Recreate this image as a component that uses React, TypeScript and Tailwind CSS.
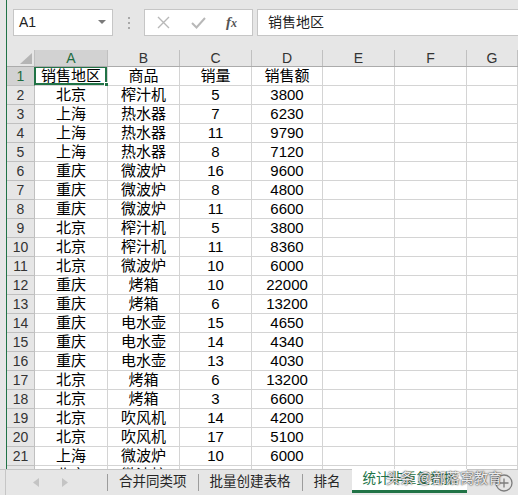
import React from 'react';

const rows: string[][] = [
  ['销售地区', '商品', '销量', '销售额'],
  ['北京', '榨汁机', '5', '3800'],
  ['上海', '热水器', '7', '6230'],
  ['上海', '热水器', '11', '9790'],
  ['上海', '热水器', '8', '7120'],
  ['重庆', '微波炉', '16', '9600'],
  ['重庆', '微波炉', '8', '4800'],
  ['重庆', '微波炉', '11', '6600'],
  ['北京', '榨汁机', '5', '3800'],
  ['北京', '榨汁机', '11', '8360'],
  ['北京', '微波炉', '10', '6000'],
  ['重庆', '烤箱', '10', '22000'],
  ['重庆', '烤箱', '6', '13200'],
  ['重庆', '电水壶', '15', '4650'],
  ['重庆', '电水壶', '14', '4340'],
  ['重庆', '电水壶', '13', '4030'],
  ['北京', '烤箱', '6', '13200'],
  ['北京', '烤箱', '3', '6600'],
  ['北京', '吹风机', '14', '4200'],
  ['北京', '吹风机', '17', '5100'],
  ['上海', '微波炉', '10', '6000'],
  ['北京', '微波炉', '', ''],
];

const cols = ['A', 'B', 'C', 'D', 'E', 'F', 'G'];
const widths = ['w-[73px]', 'w-[72px]', 'w-[72px]', 'w-[71px]', 'w-[72px]', 'w-[72px]', 'flex-1'];

const font = { fontFamily: '"Liberation Sans", "Noto Sans CJK SC", sans-serif' };

function Toolbar() {
  return (
    <div className="h-[50px] flex items-start pt-[9px] pl-[6px] shrink-0">
      {/* name box */}
      <div className="w-[100px] h-[27px] bg-white border border-[#c6c6c6] flex items-center justify-between pl-[5px] pr-[6px]">
        <span className="text-[14px] text-[#222]">A1</span>
        <svg width="8" height="5" viewBox="0 0 8 5"><path d="M0 0h8L4 4z" fill="#7a7a7a" /></svg>
      </div>
      <div className="w-[31px] h-[27px] flex flex-col items-center justify-center gap-[3px]">
        <span className="w-[2px] h-[2px] bg-[#a8a8a8]" />
        <span className="w-[2px] h-[2px] bg-[#a8a8a8]" />
        <span className="w-[2px] h-[2px] bg-[#a8a8a8]" />
      </div>
      {/* formula buttons */}
      <div className="w-[109px] h-[27px] bg-white border border-[#c6c6c6] flex items-center">
        <svg className="ml-[12px]" width="13" height="13" viewBox="0 0 13 13">
          <path d="M1 1l11 11M12 1L1 12" stroke="#b8b8b8" strokeWidth="1.4" />
        </svg>
        <svg className="ml-[21px]" width="15" height="12" viewBox="0 0 15 12">
          <path d="M1 6l4.5 4.5L14 1" stroke="#b8b8b8" strokeWidth="2" fill="none" />
        </svg>
        <span className="ml-[20px] text-[15px] italic font-bold text-[#555]" style={{ fontFamily: '"Liberation Serif", serif' }}>
          f<span className="text-[12px]">x</span>
        </span>
      </div>
      <div className="ml-[4px] flex-1 -mr-[4px] h-[27px] bg-white border border-[#c6c6c6] flex items-center pl-[10px]">
        <span className="text-[14px] text-[#222]">销售地区</span>
      </div>
    </div>
  );
}

function HeaderRow() {
  return (
    <div className="flex h-[17px] shrink-0 border-b border-[#ababab] bg-[#e6e6e6]">
      <div className="w-[28px] border-r border-[#c0c0c0] flex items-end justify-end pr-[2px] pb-[2px]">
        <svg width="12" height="11" viewBox="0 0 12 11"><path d="M12 0v11H0z" fill="#b5b5b5" /></svg>
      </div>
      {cols.map((c, i) => (
        <div
          key={c}
          className={`${widths[i]} border-r border-[#c0c0c0] flex items-center justify-center text-[14px] leading-none ${
            i === 0 ? 'bg-[#d2d2d2] text-[#1e6b40]' : 'text-[#333]'
          }`}
        >
          {c}
        </div>
      ))}
    </div>
  );
}

function DataRow({ n, data }: { n: number; data: string[] }) {
  return (
    <div className="flex h-[19px] shrink-0">
      <div
        className={`w-[28px] border-r border-b flex items-center justify-center text-[14px] ${
          n === 1 ? 'bg-[#d2d2d2] text-[#1e6b40] border-r-[#217346] border-b-[#c0c0c0]' : 'bg-[#e6e6e6] text-[#333] border-[#c0c0c0]'
        }`}
      >
        {n}
      </div>
      {cols.map((c, i) => (
        <div
          key={c}
          className={`${widths[i]} relative bg-white border-r border-b border-[#d4d4d4] flex items-center justify-center text-[15px] text-black whitespace-nowrap`}
        >
          {data[i] ?? ''}
          {n === 1 && i === 0 && (
            <>
              <div className="absolute -left-[1px] -top-[1px] right-0 bottom-0 border-2 border-[#217346]" />
              <div className="absolute -right-[3px] -bottom-[3px] w-[6px] h-[6px] bg-[#217346] border border-white" />
            </>
          )}
        </div>
      ))}
    </div>
  );
}

function TabBar() {
  const tabs = ['合并同类项', '批量创建表格', '排名'];
  return (
    <div className="h-[26px] shrink-0 flex items-stretch border-t border-[#c6c6c6] bg-[#e6e6e6] relative">
      <div className="w-[6px] border-r border-[#c6c6c6]" />
      <div className="w-[101px] flex items-center">
        <svg className="ml-[27px]" width="6" height="9" viewBox="0 0 6 9"><path d="M6 0v9L0 4.5z" fill="#c4c4c4" /></svg>
        <svg className="ml-[23px]" width="6" height="9" viewBox="0 0 6 9"><path d="M0 0v9l6-4.5z" fill="#c4c4c4" /></svg>
      </div>
      {tabs.map((t) => (
        <div key={t} className="flex items-center">
          <span className="w-[1px] h-[17px] bg-[#9c9c9c]" />
          <span className="px-[11px] text-[13.5px] text-[#262626]">{t}</span>
        </div>
      ))}
      <div className="w-[115px] bg-white border-b-[3px] border-[#217346] mb-[2px] -mt-[1px] flex items-center pl-[11px] text-[13.5px] text-[#217346]">
        统计非重复数据
      </div>
      <div className="flex-1 flex items-center justify-end pr-[5px]">
        <svg width="18" height="18" viewBox="0 0 18 18">
          <circle cx="9" cy="9" r="8" stroke="#7d7d7d" strokeWidth="1.3" fill="none" />
          <path d="M9 4.5v9M4.5 9h9" stroke="#7d7d7d" strokeWidth="1.3" />
        </svg>
      </div>
      <div
        className="absolute right-[16px] top-[1px] text-[14px] leading-none text-white/90 pointer-events-none"
        style={{ textShadow: '0 0 2px #333, 0 0 1px #333' }}
      >
        头条 @部落窝教育
      </div>
    </div>
  );
}

export default function App() {
  return (
    <div className="w-[518px] h-[495px] bg-[#e6e6e6] flex flex-col overflow-hidden" style={font}>
      <div className="flex-1 flex min-h-0">
        <div className="w-[6px] shrink-0" />
        <div className="w-[1px] shrink-0 bg-[#217346]" />
        <div className="flex-1 flex flex-col min-w-0 overflow-hidden">
          <Toolbar />
          <HeaderRow />
          <div className="flex-1 flex flex-col overflow-hidden bg-white">
            {rows.map((r, i) => (
              <DataRow key={i} n={i + 1} data={r} />
            ))}
          </div>
        </div>
      </div>
      <TabBar />
    </div>
  );
}
